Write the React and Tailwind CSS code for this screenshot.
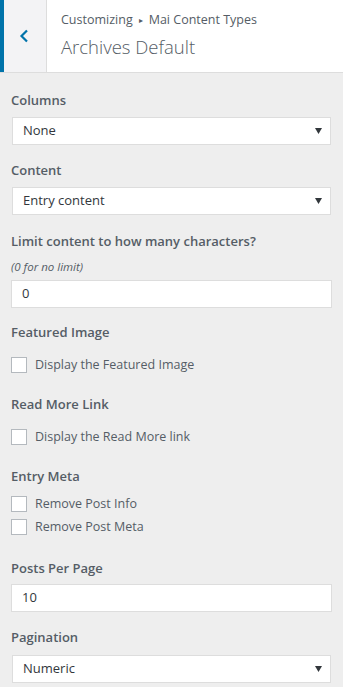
const font = { fontFamily: '"Open Sans", "Liberation Sans", sans-serif' };

function Label({ children }) {
  return <div className="text-[13px] font-semibold leading-[20px] text-[#555d66]">{children}</div>;
}

function Select({ value }) {
  return (
    <div className="mx-[1px] flex h-[28px] items-center justify-between border border-[#ddd] bg-white pl-[10px] pr-[8px] text-[13px] text-[#32373c]">
      <span>{value}</span>
      <svg width="7" height="6" viewBox="0 0 7 6">
        <path d="M0 0h7L3.5 6z" fill="#32373c" />
      </svg>
    </div>
  );
}

function Input({ value }) {
  return (
    <div className="flex h-[28px] items-center border border-[#ddd] bg-white px-[10px] text-[13px] text-[#32373c]">
      {value}
    </div>
  );
}

function Check({ children }) {
  return (
    <div className="flex h-[16px] items-center gap-[8px]">
      <div className="h-[16px] w-[16px] shrink-0 border border-[#b4b9be] bg-white" />
      <span className="text-[12.5px] leading-[16px] text-[#555d66]">{children}</span>
    </div>
  );
}

export default function App() {
  return (
    <div className="min-h-[687px] w-[343px] bg-[#eeeeee]" style={font}>
      <div className="flex h-[73px] border-b border-[#dddddd] bg-white">
        <div className="flex w-[47px] items-center justify-center border-l-[4px] border-r border-l-[#0073aa] border-r-[#dddddd] bg-[#f3f3f5]">
          <svg width="10" height="14" viewBox="0 0 10 14" className="mr-[2px]">
            <path d="M8 1.5 2.5 7 8 12.5" fill="none" stroke="#0073aa" strokeWidth="2.2" />
          </svg>
        </div>
        <div className="flex flex-col justify-center pl-[14px] pb-[2px]">
          <div className="flex items-center text-[12.5px] leading-[18px] text-[#555d66]">
            <span>Customizing</span>
            <span className="mx-[6px] text-[8px]">▸</span>
            <span>Mai Content Types</span>
          </div>
          <div className="mt-[6px] text-[18.5px] font-light leading-[24px] text-[#555d66]">Archives Default</div>
        </div>
      </div>

      <div className="flex flex-col px-[11px] pt-[17px]">
        <Label>Columns</Label>
        <div className="mt-[7px]"><Select value="None" /></div>

        <div className="mt-[15px]"><Label>Content</Label></div>
        <div className="mt-[7px]"><Select value="Entry content" /></div>

        <div className="mt-[16px]"><Label>Limit content to how many characters?</Label></div>
        <div className="mt-[7px] text-[11.5px] italic leading-[18px] text-[#555d66]">(0 for no limit)</div>
        <div className="mt-[4px]"><Input value="0" /></div>

        <div className="mt-[14px]"><Label>Featured Image</Label></div>
        <div className="mt-[15px]"><Check>Display the Featured Image</Check></div>

        <div className="mt-[21px]"><Label>Read More Link</Label></div>
        <div className="mt-[15px]"><Check>Display the Read More link</Check></div>

        <div className="mt-[21px]"><Label>Entry Meta</Label></div>
        <div className="mt-[10px]"><Check>Remove Post Info</Check></div>
        <div className="mt-[7px]"><Check>Remove Post Meta</Check></div>

        <div className="mt-[23px]"><Label>Posts Per Page</Label></div>
        <div className="mt-[6px]"><Input value="10" /></div>

        <div className="mt-[15px]"><Label>Pagination</Label></div>
        <div className="mt-[8px]"><Select value="Numeric" /></div>
      </div>
    </div>
  );
}
